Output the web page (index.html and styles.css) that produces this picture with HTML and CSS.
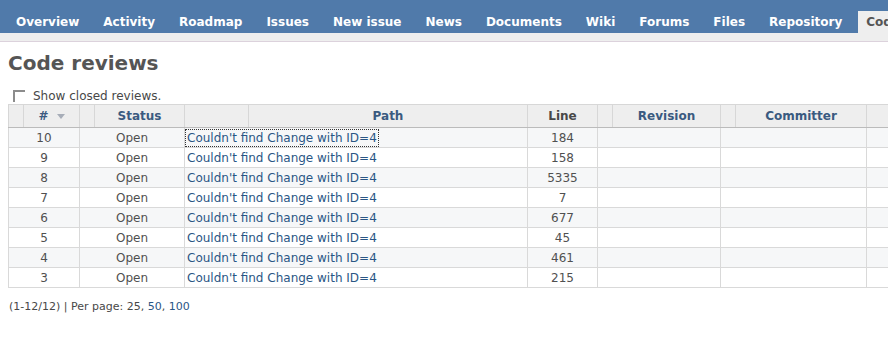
FILE: index.html
```html
<!DOCTYPE html>
<html>
<head>
<meta charset="utf-8">
<title>Code reviews</title>
<link rel="stylesheet" href="styles.css">
</head>
<body>
<div class="main-menu">
  <ul class="tabs">
    <li><a href="#">Overview</a></li>
    <li><a href="#">Activity</a></li>
    <li><a href="#">Roadmap</a></li>
    <li><a href="#">Issues</a></li>
    <li><a href="#">New issue</a></li>
    <li><a href="#">News</a></li>
    <li><a href="#">Documents</a></li>
    <li><a href="#">Wiki</a></li>
    <li><a href="#">Forums</a></li>
    <li><a href="#">Files</a></li>
    <li><a href="#">Repository</a></li>
    <li class="selected"><a href="#">Code reviews</a></li>
  </ul>
</div>
<div class="band"></div>
<div class="content">
  <h2 class="title">Code reviews</h2>
  <label class="show-closed"><span class="checkbox"></span>Show closed reviews.</label>
  <table class="list">
    <colgroup>
      <col class="w15"><col class="w56"><col class="w15"><col class="w90"><col class="w64"><col class="w279"><col class="w70"><col class="w15"><col class="w108"><col class="w15"><col class="w131"><col class="w40">
    </colgroup>
    <thead>
      <tr>
        <th></th>
        <th><a href="#">#</a> <svg class="sort" width="8" height="5" viewBox="0 0 8 5"><path d="M0 0H8L4 5Z" fill="#a7adb8"/></svg></th>
        <th></th>
        <th><a href="#">Status</a></th>
        <th></th>
        <th><a href="#">Path</a></th>
        <th class="plain">Line</th>
        <th></th>
        <th><a href="#">Revision</a></th>
        <th></th>
        <th><a href="#">Committer</a></th>
        <th></th>
      </tr>
    </thead>
    <tbody>
      <tr class="odd"><td colspan="2">10</td><td colspan="2">Open</td><td colspan="2" class="path"><a href="#" class="focused">Couldn't find Change with ID=4</a></td><td class="mono">184</td><td colspan="2"></td><td colspan="2"></td><td></td></tr>
      <tr class="even"><td colspan="2">9</td><td colspan="2">Open</td><td colspan="2" class="path"><a href="#">Couldn't find Change with ID=4</a></td><td class="mono">158</td><td colspan="2"></td><td colspan="2"></td><td></td></tr>
      <tr class="odd"><td colspan="2">8</td><td colspan="2">Open</td><td colspan="2" class="path"><a href="#">Couldn't find Change with ID=4</a></td><td class="mono">5335</td><td colspan="2"></td><td colspan="2"></td><td></td></tr>
      <tr class="even"><td colspan="2">7</td><td colspan="2">Open</td><td colspan="2" class="path"><a href="#">Couldn't find Change with ID=4</a></td><td class="mono">7</td><td colspan="2"></td><td colspan="2"></td><td></td></tr>
      <tr class="odd"><td colspan="2">6</td><td colspan="2">Open</td><td colspan="2" class="path"><a href="#">Couldn't find Change with ID=4</a></td><td class="mono">677</td><td colspan="2"></td><td colspan="2"></td><td></td></tr>
      <tr class="even"><td colspan="2">5</td><td colspan="2">Open</td><td colspan="2" class="path"><a href="#">Couldn't find Change with ID=4</a></td><td class="mono">45</td><td colspan="2"></td><td colspan="2"></td><td></td></tr>
      <tr class="odd"><td colspan="2">4</td><td colspan="2">Open</td><td colspan="2" class="path"><a href="#">Couldn't find Change with ID=4</a></td><td class="mono">461</td><td colspan="2"></td><td colspan="2"></td><td></td></tr>
      <tr class="even"><td colspan="2">3</td><td colspan="2">Open</td><td colspan="2" class="path"><a href="#">Couldn't find Change with ID=4</a></td><td class="mono">215</td><td colspan="2"></td><td colspan="2"></td><td></td></tr>
    </tbody>
  </table>
  <p class="pagination">(1-12/12) | Per page: 25, <a href="#">50</a>, <a href="#">100</a></p>
</div>
</body>
</html>
```
FILE: styles.css
```css
html, body {
  margin: 0;
  padding: 0;
  overflow: hidden;
  background: #fff;
  font-family: "DejaVu Sans", Verdana, sans-serif;
  color: #484848;
}

.main-menu {
  background: #507aaa;
  height: 33px;
  display: flex;
  align-items: flex-end;
}

.tabs {
  list-style: none;
  margin: 0;
  padding: 0 0 0 8px;
  display: flex;
  gap: 8px;
  white-space: nowrap;
  height: 22px;
}

.tabs li {
  display: flex;
  align-items: center;
  padding: 0 8px 1px 8px;
}

.tabs a {
  color: #fff;
  font-weight: bold;
  font-size: 12px;
  text-decoration: none;
}

.tabs li.selected {
  background: #eeeeee;
}

.tabs li.selected a {
  color: #555;
}

.band {
  height: 8px;
  background: #eeeeee;
  border-bottom: 1px solid #dcd2dc;
}

.content {
  padding: 0 0 0 8px;
}

.title {
  margin: 9px 0 0 0;
  font-size: 20px;
  line-height: 24px;
  font-weight: bold;
  color: #555;
}

.show-closed {
  display: flex;
  align-items: center;
  margin: 14px 0 0 5px;
  font-size: 12px;
  line-height: 14px;
  color: #484848;
}

.checkbox {
  display: inline-block;
  width: 10px;
  height: 10px;
  border-top: 2px solid #8c8c8c;
  border-left: 2px solid #8c8c8c;
  margin: 0 8px 0 0;
}

.list {
  border-collapse: collapse;
  table-layout: fixed;
  width: 898px;
  font-size: 12px;
  margin-top: 1px;
}

.w15 { width: 15px; }
.w56 { width: 56px; }
.w90 { width: 90px; }
.w64 { width: 64px; }
.w279 { width: 279px; }
.w70 { width: 70px; }
.w108 { width: 108px; }
.w131 { width: 131px; }
.w40 { width: 40px; }

.list th {
  background: #eeeeee;
  border: 1px solid #d7d7d7;
  border-bottom: 1px solid #bbbbbb;
  height: 22px;
  padding: 0;
  font-weight: bold;
  text-align: center;
  color: #484848;
}

.list th a {
  color: #3a5a80;
  text-decoration: none;
}

.sort {
  vertical-align: middle;
  margin-left: 4px;
}

.list td {
  border: 1px solid #d9d9d9;
  height: 19px;
  padding: 0;
  text-align: center;
  color: #505050;
  white-space: nowrap;
  overflow: hidden;
}

.list tr.odd td {
  background: #f6f7f8;
}

.list tr.even td {
  background: #fff;
}

.list td.path {
  text-align: left;
  padding-left: 2px;
}

.list td.path a {
  color: #2a5685;
  text-decoration: none;
}

.list td.path a.focused {
  outline: 1px dotted #333;
  outline-offset: 1px;
}

.pagination {
  margin: 12px 0 0 1px;
  font-size: 11px;
  color: #484848;
}

.pagination a {
  color: #2a5685;
  text-decoration: none;
}
```
